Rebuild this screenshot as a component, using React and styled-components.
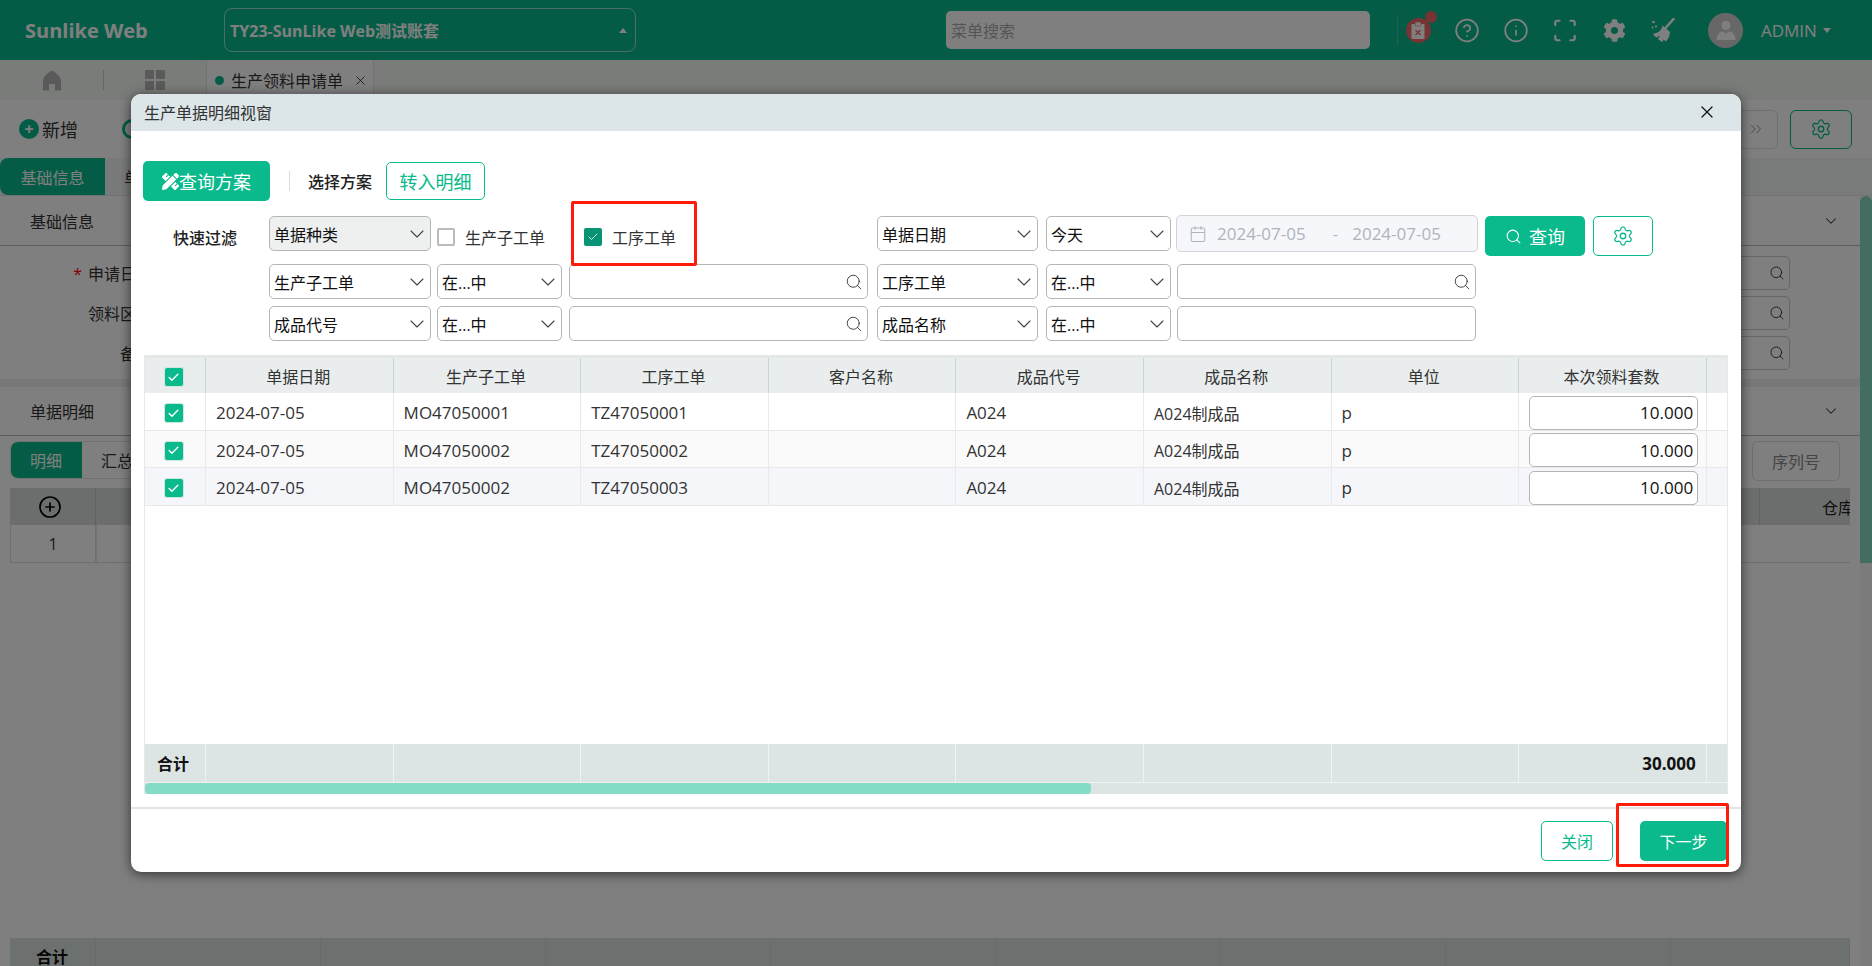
import React from 'react';
import styled, { createGlobalStyle } from 'styled-components';
import { ChevronDown, ChevronsRight, CircleHelp, Info, Scan, Settings, Search, Calendar, X, CirclePlus, Check } from 'lucide-react';
import { FaCog, FaPencilRuler } from 'react-icons/fa';

const GREEN = '#0ab98c';
const FONT = '"Open Sans", "Noto Sans CJK SC", sans-serif';

const Global = createGlobalStyle`
  html, body { margin: 0; padding: 0; height: 100%; overflow: hidden; background: #fff; }
  body { font-family: ${FONT}; font-size: 16px; color: #333; }
  * { box-sizing: border-box; }
`;

const Page = styled.div`
  position: relative;
  width: 1872px;
  height: 966px;
  overflow: hidden;
  display: flex;
  flex-direction: column;
  background: #fff;
`;

/* ---------- top header ---------- */
const Header = styled.header`
  height: 60px;
  flex: none;
  background: ${GREEN};
  display: flex;
  align-items: center;
  color: #fff;
`;
const Logo = styled.div`
  width: 224px;
  padding-left: 25px;
  font-size: 20px;
  font-weight: 700;
  white-space: nowrap;
`;
const AccountSelect = styled.div`
  width: 412px;
  height: 44px;
  border: 1px solid rgba(255, 255, 255, 0.55);
  border-radius: 8px;
  display: flex;
  align-items: center;
  justify-content: space-between;
  padding: 0 8px 0 5px;
  font-size: 16px;
  font-weight: 700;
  white-space: nowrap;
`;
const Caret = styled.span`
  width: 0;
  height: 0;
  border-left: 4px solid transparent;
  border-right: 4px solid transparent;
  border-${(p) => (p.$up ? 'bottom' : 'top')}: 5px solid #fff;
`;
const MenuSearch = styled.div`
  width: 424px;
  height: 38px;
  margin-left: 310px;
  background: #fff;
  border-radius: 5px;
  padding-left: 5px;
  display: flex;
  align-items: center;
  color: #aaa;
  font-size: 16px;
`;
const HeadDivider = styled.div`
  width: 1px;
  height: 30px;
  margin: 0 7px 0 27px;
  background: rgba(255, 255, 255, 0.2);
`;
const HeadIcons = styled.div`
  display: flex;
  gap: 23px;
  align-items: center;
`;
const HeadIcon = styled.div`
  position: relative;
  width: 26px;
  height: 26px;
  display: flex;
  align-items: center;
  justify-content: center;
  color: #fff;
`;
const AlertCircle = styled.div`
  width: 25px;
  height: 25px;
  border-radius: 50%;
  background: #f0666a;
  display: flex;
  align-items: center;
  justify-content: center;
`;
const Dot = styled.span`
  position: absolute;
  top: -6px;
  right: -6px;
  width: 12px;
  height: 12px;
  border-radius: 50%;
  background: #f0666a;
`;
const Avatar = styled.div`
  width: 35px;
  height: 35px;
  margin-left: 32px;
  border-radius: 50%;
  background: #cfcfcf;
  overflow: hidden;
  display: flex;
  align-items: center;
  justify-content: center;
`;
const UserName = styled.div`
  margin-left: 18px;
  font-size: 17px;
  display: flex;
  align-items: center;
  gap: 6px;
`;

/* ---------- tab strip ---------- */
const TabStrip = styled.div`
  height: 40px;
  flex: none;
  background: #f4f8f4;
  display: flex;
  align-items: center;
  color: #777;
`;
const HomeCell = styled.div`
  width: 103px;
  height: 100%;
  display: flex;
  align-items: center;
  justify-content: center;
  color: #b4b4b4;
`;
const StripDivider = styled.div`
  width: 1px;
  height: 20px;
  background: #ccc;
`;
const GridCell = styled.div`
  width: 102px;
  height: 100%;
  display: flex;
  align-items: center;
  justify-content: center;
  color: #b4b4b4;
`;
const GridIcon = styled.div`
  display: grid;
  grid-template-columns: 9px 9px;
  grid-auto-rows: 9px;
  gap: 2px;
  & > span { background: currentColor; border-radius: 1px; }
`;
const PageTab = styled.div`
  width: 168px;
  height: 100%;
  background: #fff;
  border-left: 1px solid #e3e3e3;
  border-right: 1px solid #e3e3e3;
  display: flex;
  align-items: center;
  padding-left: 8px;
  font-size: 16px;
  color: #333;
`;
const TabDot = styled.span`
  width: 9px;
  height: 9px;
  margin-right: 7px;
  border-radius: 50%;
  background: ${GREEN};
`;
const TabClose = styled.span`
  margin-left: 10px;
  display: flex;
  color: #333;
`;

/* ---------- toolbar under the strip ---------- */
const Toolbar = styled.div`
  height: 58px;
  flex: none;
  display: flex;
  align-items: center;
  justify-content: space-between;
  padding: 0 20px 0 19px;
`;
const AddAction = styled.div`
  display: flex;
  align-items: center;
  gap: 3px;
  font-size: 18px;
  color: #333;
`;
const AddCircle = styled.span`
  width: 20px;
  height: 20px;
  border-radius: 50%;
  background: ${GREEN};
  color: #fff;
  display: flex;
  align-items: center;
  justify-content: center;
  font-size: 16px;
  line-height: 1;
  font-weight: 700;
`;
const QueryRing = styled.span`
  width: 20px;
  height: 20px;
  margin-left: 44px;
  border: 3px solid ${GREEN};
  border-radius: 50%;
`;
const ToolLeft = styled.div`
  display: flex;
  align-items: center;
`;
const ToolRight = styled.div`
  display: flex;
  gap: 12px;
`;
const ToolBtn = styled.div`
  width: ${(p) => p.$w}px;
  height: 39px;
  border: 1px solid ${(p) => (p.$accent ? GREEN : '#ddd')};
  border-radius: 6px;
  color: ${(p) => (p.$accent ? GREEN : '#888')};
  display: flex;
  align-items: center;
  justify-content: ${(p) => (p.$accent ? 'center' : 'flex-end')};
  padding-right: ${(p) => (p.$accent ? 0 : 12)}px;
`;

/* ---------- underlying form ---------- */
const FormTabs = styled.div`
  height: 38px;
  flex: none;
  display: flex;
  background: #f2f4f4;
  border-bottom: 1px solid #e5e5e5;
`;
const FormTab = styled.div`
  width: 105px;
  background: ${GREEN};
  color: #fff;
  border-radius: 8px 0 0 8px;
  display: flex;
  align-items: center;
  justify-content: center;
  font-size: 16px;
`;
const FormTabNext = styled.div`
  margin-left: 19px;
  display: flex;
  align-items: center;
`;
const SectionHead = styled.div`
  height: ${(p) => p.$h}px;
  flex: none;
  display: flex;
  align-items: center;
  justify-content: space-between;
  padding: 0 32px 0 30px;
  border-bottom: 1px solid #bbb;
  color: #333;
`;
const FormBody = styled.div`
  height: 133px;
  flex: none;
  padding-top: 10px;
  display: flex;
  flex-direction: column;
  gap: 6px;
`;
const FormRow = styled.div`
  height: 34px;
  display: flex;
  justify-content: space-between;
  align-items: center;
  padding-right: 82px;
`;
const FormLabel = styled.div`
  width: 152px;
  text-align: right;
  white-space: nowrap;
  color: #333;
`;
const Star = styled.span`
  color: #f00;
  margin-right: 6px;
`;
const FormInput = styled.div`
  width: 80px;
  height: 34px;
  border: 1px solid #ccc;
  border-radius: 5px;
  display: flex;
  align-items: center;
  justify-content: flex-end;
  padding-right: 4px;
  color: #333;
`;
const Band = styled.div`
  height: 8px;
  flex: none;
  background: #eef0f0;
`;
const DetailBar = styled.div`
  height: 52px;
  flex: none;
  display: flex;
  justify-content: space-between;
  padding: 5px 32px 0 10px;
`;
const DetailTabs = styled.div`
  display: flex;
  height: 38px;
  width: 160px;
  border: 1px solid #e5e5e5;
  border-radius: 8px;
  overflow: hidden;
`;
const DetailTabOn = styled.div`
  flex: 0 0 72px;
  margin-left: -1px;
  background: ${GREEN};
  color: #fff;
  display: flex;
  align-items: center;
  justify-content: center;
`;
const DetailTabOff = styled.div`
  padding-left: 19px;
  white-space: nowrap;
  display: flex;
  align-items: center;
`;
const SerialBtn = styled.div`
  width: 88px;
  height: 40px;
  border: 1px solid #ddd;
  border-radius: 6px;
  color: #888;
  display: flex;
  align-items: center;
  justify-content: center;
`;
const BackArea = styled.div`
  margin: 0 22px 0 10px;
  flex: 1;
  display: flex;
  flex-direction: column;
  min-height: 0;
`;
const BackHeadRow = styled.div`
  height: 37px;
  flex: none;
  display: grid;
  grid-template-columns: 86px 1fr 90px;
  background: #d9dddc;
  overflow: hidden;
`;
const BackHeadCell = styled.div`
  display: flex;
  align-items: center;
  justify-content: center;
  padding-right: ${(p) => (p.$icon ? 6 : 0)}px;
  border-right: 1px solid #bcc3d2;
  color: #000;
`;
const BackHeadLast = styled.div`
  display: flex;
  align-items: center;
  padding-left: 62px;
  white-space: nowrap;
  color: #222;
`;
const BackRow = styled.div`
  height: 38px;
  flex: none;
  display: flex;
  border-bottom: 1px solid #ddd;
  border-left: 1px solid #ddd;
`;
const BackIndex = styled.div`
  width: 85px;
  border-right: 1px solid #ddd;
  display: flex;
  align-items: center;
  justify-content: center;
  color: #333;
`;
const BackFill = styled.div`
  flex: 1;
  border-left: 1px solid #e5e5e5;
`;
const BackFoot = styled.div`
  height: 28px;
  flex: none;
  display: grid;
  grid-template-columns: 86px 225px 225px 225px 225px 225px 225px 225px 1fr;
  background: #d9e0de;
  overflow: hidden;
`;
const BackFootCell = styled.div`
  border-right: 1px solid #cfd6d4;
  padding: 6px 0 0 26px;
  font-weight: 700;
  color: #111;
  white-space: nowrap;
`;
const PageScroll = styled.div`
  position: absolute;
  top: 196px;
  right: 0;
  width: 12px;
  height: 770px;
  background: #f6f6f6;
  &::before {
    content: '';
    display: block;
    width: 12px;
    height: 367px;
    background: #84dbc6;
    border-radius: 6px 6px 0 0;
  }
`;

/* ---------- dialog ---------- */
const Overlay = styled.div`
  position: absolute;
  inset: 0;
  background: rgba(0, 0, 0, 0.5);
  padding: 94px 0 0 131px;
`;
const Modal = styled.div`
  position: relative;
  width: 1610px;
  height: 778px;
  background: #fff;
  border-radius: 10px;
  box-shadow: 0 2px 12px rgba(0, 0, 0, 0.6);
  display: flex;
  flex-direction: column;
  overflow: hidden;
`;
const ModalTitle = styled.div`
  height: 37px;
  flex: none;
  background: #dce5e7;
  display: flex;
  align-items: center;
  justify-content: space-between;
  padding: 0 24px 1px 13px;
  font-size: 16px;
  color: #333;
`;
const ModalClose = styled.span`
  display: flex;
  color: #111;
`;
const ModalBody = styled.div`
  flex: 1;
  min-height: 0;
  padding: 30px 13px 13px 12px;
  display: flex;
  flex-direction: column;
`;
const TopRow = styled.div`
  height: 40px;
  flex: none;
  display: flex;
  align-items: center;
`;
const SolidBtn = styled.button`
  height: 40px;
  width: ${(p) => p.$w}px;
  border: 0;
  border-radius: 5px;
  background: ${GREEN};
  color: #fff;
  font-family: ${FONT};
  font-size: ${(p) => p.$fs || 18}px;
  display: flex;
  align-items: center;
  justify-content: center;
  gap: ${(p) => p.$gap ?? 0}px;
  padding: 0;
`;
const OutlineBtn = styled.button`
  height: ${(p) => p.$h || 40}px;
  width: ${(p) => p.$w}px;
  border: 1px solid ${GREEN};
  border-radius: 5px;
  background: #fff;
  color: ${GREEN};
  font-family: ${FONT};
  font-size: ${(p) => p.$fs || 16}px;
  display: flex;
  align-items: center;
  justify-content: center;
  padding: 0;
`;
const TopDivider = styled.div`
  width: 1px;
  height: 20px;
  margin: 0 18px 0 19px;
  background: #ddd;
`;
const PlanLabel = styled.div`
  font-size: 16px;
  font-weight: 500;
  color: #222;
  margin-right: 14px;
`;
const FilterGrid = styled.div`
  position: relative;
  flex: none;
  margin-top: 15px;
  display: grid;
  grid-template-columns: 126px 168px 132px 308px 169px 131px 308px 108px 60px;
  grid-template-rows: 41px 35px 35px;
  row-gap: 7px;
  align-items: start;
`;
const FilterLabel = styled.div`
  padding: 9px 0 0 30px;
  font-size: 16px;
  font-weight: 500;
  color: #222;
`;
const Field = styled.div`
  width: ${(p) => p.$w}px;
  height: 35px;
  border: 1px solid #b5b5b5;
  border-radius: 5px;
  background: ${(p) => (p.$off ? '#eef0f0' : '#fff')};
  display: flex;
  align-items: center;
  justify-content: space-between;
  padding: 0 1px 0 4px;
  font-size: 16px;
  color: #111;
  white-space: nowrap;
  overflow: hidden;
`;
const LookupIcon = styled.span`
  display: flex;
  margin-right: 3px;
  color: #333;
`;
const CheckWrap = styled.div`
  grid-column: span 2;
  display: flex;
  padding-top: 9px;
`;
const CheckItem = styled.label`
  width: ${(p) => p.$w}px;
  display: flex;
  align-items: center;
  gap: 10px;
  font-size: 16px;
  color: #333;
`;
const Box = styled.span`
  width: 18px;
  height: 18px;
  border: 2px solid ${(p) => (p.$on ? '#069475' : '#bbb')};
  background: ${(p) => (p.$on ? '#069475' : '#fff')};
  border-radius: 2px;
  color: #fff;
  display: flex;
  align-items: center;
  justify-content: center;
`;
const DateRange = styled.div`
  width: 302px;
  height: 37px;
  margin: -1px 0 0 -1px;
  border: 1px solid #d2d4d8;
  border-radius: 5px;
  background: #f5f7fa;
  display: flex;
  align-items: center;
  padding-left: 12px;
  color: #b0b3ba;
  font-size: 17px;
  white-space: nowrap;
`;
const DateSep = styled.span`
  margin: 0 14px 0 27px;
`;
const CalSlot = styled.span`
  display: flex;
  margin-right: 10px;
`;
const RedMark = styled.div`
  position: absolute;
  border: 3px solid #ff1a0a;
  border-radius: 2px;
  pointer-events: none;
  left: ${(p) => p.$l}px;
  top: ${(p) => p.$t}px;
  width: ${(p) => p.$w}px;
  height: ${(p) => p.$h}px;
`;

const Table = styled.div`
  flex: 1;
  min-height: 0;
  margin: 14px 0 0 1px;
  border-top: 3px solid #e6e8e8;
  border-left: 1px solid #e8e8e8;
  border-right: 1px solid #e8e8e8;
  display: flex;
  flex-direction: column;
  position: relative;
`;
const COLS = '61px repeat(8, 187.6px) 1fr';
const HeadRow = styled.div`
  height: 35px;
  flex: none;
  display: grid;
  grid-template-columns: ${COLS};
  background: #e9eded;
`;
const HeadCell = styled.div`
  padding-right: 2px;
  border-right: 1px solid #ccd1e0;
  display: flex;
  align-items: center;
  justify-content: center;
  font-size: 16px;
  color: #333;
`;
const BodyRow = styled.div`
  height: ${(p) => p.$h}px;
  flex: none;
  display: grid;
  grid-template-columns: ${COLS};
  background: ${(p) => p.$bg};
  border-bottom: 1px solid #e6e8ec;
`;
const BodyCell = styled.div`
  border-right: 1px solid #e8e9ee;
  display: flex;
  align-items: center;
  padding: 2px 0 0 10px;
  font-size: ${(p) => p.$fs || 16}px;
  color: #333;
  white-space: nowrap;
`;
const CheckCell = styled.div`
  border-right: 1px solid ${(p) => p.$line};
  display: flex;
  align-items: center;
  justify-content: center;
  padding: 3px 3px 0 0;
`;
const RowCheck = styled.span`
  width: 20px;
  height: 20px;
  border: 1px solid #cfe8dd;
  border-radius: 3px;
  background: ${GREEN};
  color: #fff;
  display: flex;
  align-items: center;
  justify-content: center;
`;
const QtyInput = styled.div`
  width: 169px;
  height: 34px;
  border: 1px solid #b5b5b5;
  border-radius: 5px;
  background: #fff;
  display: flex;
  align-items: center;
  justify-content: flex-end;
  padding-right: 4px;
  font-size: 17px;
  color: #111;
`;
const Filler = styled.div`
  flex: 1;
`;
const FootRow = styled.div`
  height: 38px;
  flex: none;
  display: grid;
  grid-template-columns: ${COLS};
  background: #dce5e3;
`;
const FootCell = styled.div`
  border-right: 1px solid #eef2f1;
  display: flex;
  align-items: center;
  justify-content: ${(p) => (p.$end ? 'flex-end' : 'flex-start')};
  padding: ${(p) => (p.$end ? '0 10px 0 0' : '0 0 0 12px')};
  font-size: ${(p) => (p.$end ? 17 : 16)}px;
  font-weight: 700;
  color: #111;
`;
const Track = styled.div`
  height: 12px;
  flex: none;
  border-top: 1px solid #eef2f1;
  background: #dce5e3;
`;
const Thumb = styled.div`
  width: 946px;
  height: 11px;
  background: #84dbc6;
  border-radius: 4px;
`;
const ModalFoot = styled.div`
  height: 65px;
  flex: none;
  border-top: 2px solid #e4e4e8;
  display: flex;
  align-items: flex-start;
  justify-content: flex-end;
  gap: 27px;
  padding: 12px 14px 0 0;
`;

const Chevron = () => <ChevronDown size={24} strokeWidth={1.1} color="#444" />;
const Sel = ({ w, off, children }) => (
  <Field $w={w} $off={off}>
    <span>{children}</span>
    <Chevron />
  </Field>
);
const Lookup = ({ icon }) => (
  <Field $w={299}>
    <span />
    {icon && <LookupIcon><Search size={18} strokeWidth={1.2} /></LookupIcon>}
  </Field>
);
const Tick = () => <Check size={13} strokeWidth={2.6} />;

const HomeGlyph = () => (
  <svg width="20" height="21" viewBox="0 0 20 21" fill="currentColor">
    <path d="M10 0.500C13 2 19 6 19 11V20.500H13V14H7V20.500H1V11C1 6 7 2 10 0.500Z" />
  </svg>
);
const BroomGlyph = () => (
  <svg width="25" height="25" viewBox="0 0 25 25" fill="currentColor">
    <path d="M15 9.500L22.500 1" stroke="currentColor" strokeWidth="2.6" strokeLinecap="round" fill="none" />
    <path d="M11.500 7.500l7.500 6.500c0 3.500-2 7-4 9.500l-2.500-2-1 2.500c-2-.8-3.500-2-4.500-3l2.500-3.500-4 2c-1.500-1-2.500-2-3.500-3.500l4.500-1.500c3-1.500 4.500-4 5-7z" />
    <circle cx="2.500" cy="4" r="1.300" />
    <circle cx="5" cy="8.500" r="1.100" />
    <circle cx="1.500" cy="9.500" r="0.900" />
  </svg>
);

const headers = ['单据日期', '生产子工单', '工序工单', '客户名称', '成品代号', '成品名称', '单位', '本次领料套数'];
const rows = [
  { wo: 'MO47050001', tz: 'TZ47050001', bg: '#ffffff', h: 38 },
  { wo: 'MO47050002', tz: 'TZ47050002', bg: '#fafafa', h: 37 },
  { wo: 'MO47050002', tz: 'TZ47050003', bg: '#f4f6fa', h: 38 },
];

export default function App() {
  return (
    <Page>
      <Global />
      <Header>
        <Logo>Sunlike Web</Logo>
        <AccountSelect>
          <span>TY23-SunLike Web测试账套</span>
          <Caret $up />
        </AccountSelect>
        <MenuSearch>菜单搜索</MenuSearch>
        <HeadDivider />
        <HeadIcons>
          <HeadIcon>
            <AlertCircle>
              <svg width="14" height="17" viewBox="0 0 14 17">
                <rect x="0.5" y="2" width="13" height="15" rx="1" fill="#fff" />
                <rect x="4" y="0" width="6" height="4" rx="1" fill="#fff" stroke="#f0666a" strokeWidth="0.6" />
                <path d="M4.500 8l5 5M9.500 8l-5 5" stroke="#f0666a" strokeWidth="1.400" />
              </svg>
            </AlertCircle>
            <Dot />
          </HeadIcon>
          <HeadIcon><CircleHelp size={27} strokeWidth={1.6} /></HeadIcon>
          <HeadIcon><Info size={27} strokeWidth={1.6} /></HeadIcon>
          <HeadIcon><Scan size={27} strokeWidth={2} /></HeadIcon>
          <HeadIcon><FaCog size={23} /></HeadIcon>
          <HeadIcon><BroomGlyph /></HeadIcon>
        </HeadIcons>
        <Avatar>
          <svg width="24" height="24" viewBox="0 0 24 24">
            <circle cx="12" cy="7.500" r="4.500" fill="#fff" />
            <path d="M2.500 22c0-6 3.500-8.500 6.500-8.500l3 2 3-2c3 0 6.500 2.500 6.500 8.500z" fill="#fff" />
          </svg>
        </Avatar>
        <UserName>ADMIN<Caret /></UserName>
      </Header>

      <TabStrip>
        <HomeCell><HomeGlyph /></HomeCell>
        <StripDivider />
        <GridCell><GridIcon><span /><span /><span /><span /></GridIcon></GridCell>
        <PageTab>
          <TabDot />
          生产领料申请单
          <TabClose><X size={15} strokeWidth={1.4} /></TabClose>
        </PageTab>
      </TabStrip>

      <Toolbar>
        <ToolLeft>
          <AddAction><AddCircle>+</AddCircle>新增</AddAction>
          <QueryRing />
        </ToolLeft>
        <ToolRight>
          <ToolBtn $w={90}><ChevronsRight size={18} strokeWidth={1.2} /></ToolBtn>
          <ToolBtn $w={62} $accent><Settings size={22} strokeWidth={1.4} /></ToolBtn>
        </ToolRight>
      </Toolbar>

      <FormTabs>
        <FormTab>基础信息</FormTab>
        <FormTabNext>单</FormTabNext>
      </FormTabs>
      <SectionHead $h={50}>基础信息<ChevronDown size={18} strokeWidth={1.4} /></SectionHead>
      <FormBody>
        <FormRow><FormLabel><Star>*</Star>申请日期</FormLabel><FormInput><Search size={16} strokeWidth={1.4} /></FormInput></FormRow>
        <FormRow><FormLabel>领料区域</FormLabel><FormInput><Search size={16} strokeWidth={1.4} /></FormInput></FormRow>
        <FormRow><FormLabel>备注</FormLabel><FormInput><Search size={16} strokeWidth={1.4} /></FormInput></FormRow>
      </FormBody>
      <Band />
      <SectionHead $h={49}>单据明细<ChevronDown size={18} strokeWidth={1.4} /></SectionHead>
      <DetailBar>
        <DetailTabs>
          <DetailTabOn>明细</DetailTabOn>
          <DetailTabOff>汇总</DetailTabOff>
        </DetailTabs>
        <SerialBtn>序列号</SerialBtn>
      </DetailBar>
      <BackArea>
        <BackHeadRow>
          <BackHeadCell $icon><CirclePlus size={24} strokeWidth={1.7} /></BackHeadCell>
          <BackHeadCell />
          <BackHeadLast>仓库</BackHeadLast>
        </BackHeadRow>
        <BackRow><BackIndex>1</BackIndex><BackFill /></BackRow>
        <Filler />
        <BackFoot>
          <BackFootCell>合计</BackFootCell>
          <BackFootCell /><BackFootCell /><BackFootCell /><BackFootCell />
          <BackFootCell /><BackFootCell /><BackFootCell /><BackFootCell />
        </BackFoot>
      </BackArea>
      <PageScroll />

      <Overlay>
        <Modal>
          <ModalTitle>
            生产单据明细视窗
            <ModalClose><X size={20} strokeWidth={1.5} /></ModalClose>
          </ModalTitle>
          <ModalBody>
            <TopRow>
              <SolidBtn $w={127}><FaPencilRuler size={17} />查询方案</SolidBtn>
              <TopDivider />
              <PlanLabel>选择方案</PlanLabel>
              <OutlineBtn $w={99} $h={38} $fs={18}>转入明细</OutlineBtn>
            </TopRow>
            <FilterGrid>
              <FilterLabel>快速过滤</FilterLabel>
              <Sel w={162} off>单据种类</Sel>
              <CheckWrap>
                <CheckItem $w={147}><Box />生产子工单</CheckItem>
                <CheckItem $w={100}><Box $on><Check size={12} strokeWidth={1.6} /></Box>工序工单</CheckItem>
              </CheckWrap>
              <Sel w={161}>单据日期</Sel>
              <Sel w={125}>今天</Sel>
              <DateRange>
                <CalSlot><Calendar size={18} strokeWidth={1.4} /></CalSlot>
                2024-07-05<DateSep>-</DateSep>2024-07-05
              </DateRange>
              <SolidBtn $w={100} $gap={7}><Search size={17} strokeWidth={1.5} />查询</SolidBtn>
              <OutlineBtn $w={60}><Settings size={22} strokeWidth={1.4} /></OutlineBtn>

              <span />
              <Sel w={162}>生产子工单</Sel>
              <Sel w={125}>在...中</Sel>
              <Lookup icon />
              <Sel w={161}>工序工单</Sel>
              <Sel w={125}>在...中</Sel>
              <Lookup icon />
              <span /><span />

              <span />
              <Sel w={162}>成品代号</Sel>
              <Sel w={125}>在...中</Sel>
              <Lookup icon />
              <Sel w={161}>成品名称</Sel>
              <Sel w={125}>在...中</Sel>
              <Lookup />
              <span /><span />

              <RedMark $l={428} $t={-15} $w={126} $h={65} />
            </FilterGrid>
            <Table>
              <HeadRow>
                <CheckCell $line="#ccd1e0"><RowCheck><Tick /></RowCheck></CheckCell>
                {headers.map((h) => <HeadCell key={h}>{h}</HeadCell>)}
                <span />
              </HeadRow>
              {rows.map((r, i) => (
                <BodyRow key={i} $bg={r.bg} $h={r.h}>
                  <CheckCell $line="#e8e9ee"><RowCheck><Tick /></RowCheck></CheckCell>
                  <BodyCell $fs={17}>2024-07-05</BodyCell>
                  <BodyCell $fs={17}>{r.wo}</BodyCell>
                  <BodyCell $fs={17}>{r.tz}</BodyCell>
                  <BodyCell />
                  <BodyCell $fs={17}>A024</BodyCell>
                  <BodyCell>A024制成品</BodyCell>
                  <BodyCell $fs={17}>p</BodyCell>
                  <BodyCell><QtyInput>10.000</QtyInput></BodyCell>
                  <span />
                </BodyRow>
              ))}
              <Filler />
              <FootRow>
                <FootCell>合计</FootCell>
                <FootCell /><FootCell /><FootCell /><FootCell /><FootCell /><FootCell /><FootCell />
                <FootCell $end>30.000</FootCell>
                <span />
              </FootRow>
              <Track><Thumb /></Track>
            </Table>
          </ModalBody>
          <ModalFoot>
            <OutlineBtn $w={72}>关闭</OutlineBtn>
            <SolidBtn $w={87} $fs={16}>下一步</SolidBtn>
          </ModalFoot>
          <RedMark $l={1485} $t={709} $w={113} $h={64} />
        </Modal>
      </Overlay>
    </Page>
  );
}
